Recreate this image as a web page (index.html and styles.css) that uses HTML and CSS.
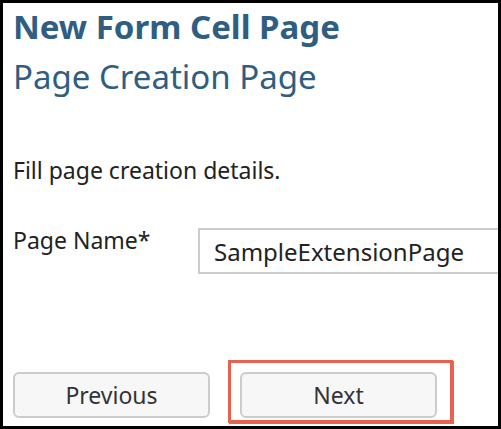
FILE: index.html
```html
<!DOCTYPE html>
<html lang="en">
<head>
  <meta charset="UTF-8">
  <meta name="viewport" content="width=device-width, initial-scale=1.0">
  <title>New Form Cell Page</title>
  <link rel="stylesheet" href="styles.css">
</head>
<body>
  <div class="frame">
    <h1 class="title">New Form Cell Page</h1>
    <h2 class="subtitle">Page Creation Page</h2>

    <p class="intro">Fill page creation details.</p>

    <div class="field">
      <label for="pageName">Page Name*</label>
      <input type="text" id="pageName" value="SampleExtensionPage">
    </div>

    <div class="actions">
      <button class="btn btn-prev">Previous</button>
      <div class="highlight">
        <button class="btn">Next</button>
      </div>
    </div>
  </div>
</body>
</html>
```

FILE: styles.css
```css
body {
  margin: 0;
  font-family: 'Noto Sans', sans-serif;
  color: #222222;
  background: #ffffff;
}
.frame {
  width: 501px;
  height: 429px;
  box-sizing: border-box;
  border: 3px solid #000000;
  padding-left: 10px;
  overflow: hidden;
}
.title {
  margin: 4px 0 0;
  font-size: 33px;
  line-height: 40px;
  font-weight: 700;
  color: #2f5e82;
}
.subtitle {
  margin: 10px 0 0;
  font-size: 33px;
  line-height: 40px;
  font-weight: 400;
  color: #2f5e82;
}
.intro {
  margin: 58px 0 0;
  font-size: 23px;
  line-height: 30px;
}
.field {
  display: flex;
  align-items: flex-start;
  margin-top: 40px;
}
.field label {
  width: 185px;
  font-size: 23px;
  line-height: 30px;
  flex-shrink: 0;
}
.field input {
  width: 340px;
  height: 46px;
  box-sizing: border-box;
  margin-top: 3px;
  padding: 0 14px;
  border: 2px solid #cccccc;
  font-family: inherit;
  font-size: 24px;
  color: #222222;
  flex-shrink: 0;
}
.actions {
  display: flex;
  align-items: flex-start;
  margin-top: 86px;
}
.btn {
  width: 197px;
  height: 46px;
  border: 2px solid #cccccc;
  border-radius: 6px;
  background: #f7f7f7;
  font-family: inherit;
  font-size: 23px;
  color: #333333;
  cursor: pointer;
}
.btn-prev {
  margin-top: 12px;
}
.highlight {
  margin-left: 18px;
  padding: 9px 13px 2px 9px;
  border: 3px solid #e8604f;
  box-shadow: 1px 1px 0 #8a8a8a;
}
```
